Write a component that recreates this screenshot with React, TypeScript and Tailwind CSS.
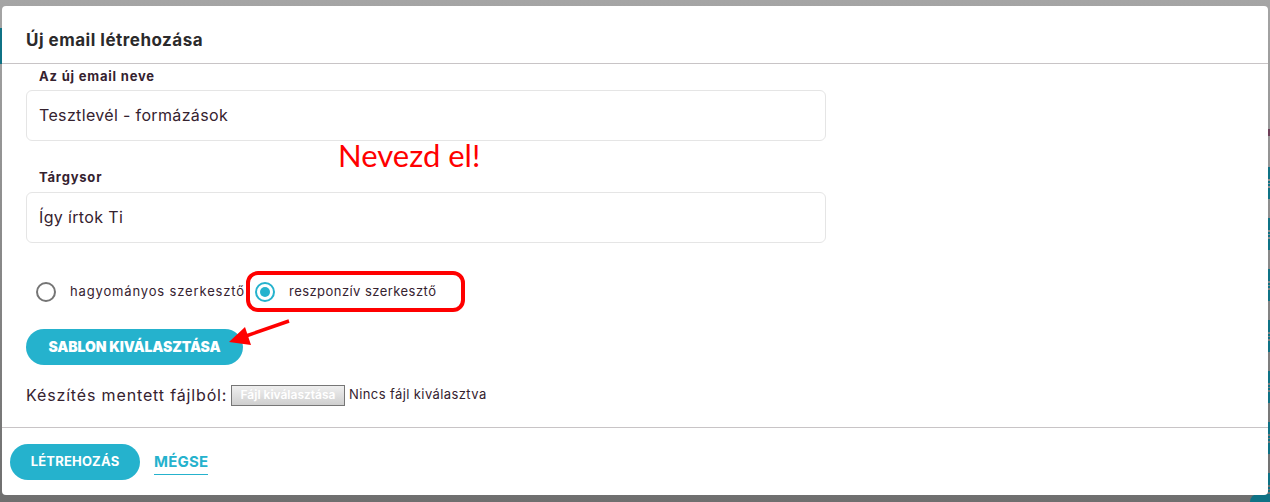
const font = "font-['Inter','Liberation_Sans',sans-serif]"

const stripeTops = [167, 218, 269, 320, 371, 422, 473]

function Field({ label, value, wide }: { label: string; value: string; wide?: boolean }) {
  return (
    <div className="w-[800px]">
      <p className="pl-[13px] text-[13px] leading-[20px] font-bold tracking-[0.8px] text-[#35222f]">{label}</p>
      <div className={`${wide ? 'mt-[5px]' : 'mt-[4px]'} h-[51px] rounded-md border border-[#e5e5e5] pl-[12px] pb-[2px] flex items-center text-[16px] tracking-[0.35px] text-[#35222f]`}>
        {value}
      </div>
    </div>
  )
}

function Radio({ checked }: { checked?: boolean }) {
  if (checked) {
    return (
      <span className="w-5 h-5 rounded-full border-2 border-[#25b2cd] flex items-center justify-center shrink-0">
        <span className="w-[10px] h-[10px] rounded-full bg-[#25b2cd]" />
      </span>
    )
  }
  return <span className="block w-5 h-5 rounded-full border-2 border-[#757575] shrink-0" />
}

export default function App() {
  return (
    <div className={`${font} relative w-[1270px] h-[502px] overflow-hidden bg-gradient-to-b from-[#a5a5a5] to-[#6f6f6f] pt-[6px] pl-[2px]`}>
      {/* backdrop peeking out around the modal */}
      <div className="absolute left-0 top-[28px] w-[2px] h-[36px] bg-[#0f7285]" />
      <div className="absolute right-0 top-[129px] w-[2px] h-[7px] bg-[#6e3f58]" />
      {stripeTops.map((top) => (
        <div key={top} className="absolute right-0 w-[2px] h-[32px] flex flex-col justify-between" style={{ top }}>
          <div className="h-[12px] bg-[#0f7285]" />
          <div className="h-[2px] bg-[#0f7285]" />
          <div className="h-[2px] bg-[#0f7285]" />
          <div className="h-[11px] bg-[#0f7285]" />
        </div>
      ))}
      <div className="absolute right-0 bottom-0 w-[20px] h-[8px] rounded-tl-full bg-[#0f7285]" />

      <div className="relative w-[1266px] h-[489px] rounded-[4px] bg-white flex flex-col">
        <div className="h-[58px] shrink-0 border-b border-[#c8c4c6] pl-[24px] pt-[22px] text-[17px] leading-[24px] tracking-[0.5px] font-bold text-[#2b2a2b]">
          Új email létrehozása
        </div>

        <div className="flex-1 pl-[24px]">
          <div className="pt-[2px]">
            <Field label="Az új email neve" value="Tesztlevél - formázások" />
          </div>
          <div className="mt-[26px]">
            <Field label="Tárgysor" value="Így írtok Ti" wide />
          </div>

          <div className="mt-[28px] h-[42px] flex items-center text-[13px] text-[#35222f]">
            <span className="block ml-[10px]"><Radio /></span>
            <span className="ml-[14px] w-[175px] tracking-[0.85px] whitespace-nowrap">hagyományos szerkesztő</span>
            <span className="relative flex items-center ml-[10px]">
              <Radio checked />
              <span className="ml-[14px] tracking-[0.45px]">reszponzív szerkesztő</span>
            </span>
          </div>

          <button className="mt-[16px] block w-[217px] h-[36px] pb-[2px] rounded-full bg-[#25b2cd] text-white text-[14px] tracking-[-0.1px] font-black">
            SABLON KIVÁLASZTÁSA
          </button>

          <div className="mt-[19px] flex items-center h-[22px] text-[16px] tracking-[0.85px] text-[#35222f]">
            <span className="w-[200px] whitespace-nowrap">Készítés mentett fájlból:</span>
            <span className="ml-[5px] w-[114px] h-[21px] border border-[#767676] bg-gradient-to-b from-[#efefef] to-[#cfcfcf] text-[12px] text-white font-semibold tracking-normal flex items-center justify-center">
              Fájl kiválasztása
            </span>
            <span className="ml-[4px] text-[13px] tracking-[0.4px]">Nincs fájl kiválasztva</span>
          </div>
        </div>

        <div className="h-[68px] shrink-0 border-t border-[#c8c4c6] pl-[8px] pt-[16px] flex items-start">
          <button className="w-[130px] h-[36px] rounded-full bg-[#25b2cd] text-white text-[13px] tracking-[0.2px] font-bold">
            LÉTREHOZÁS
          </button>
          <span className="ml-[14px] h-[31px] border-b border-[#25b2cd] text-[#25b2cd] text-[15px] leading-[36px] tracking-[0.2px] font-bold">
            MÉGSE
          </span>
        </div>

        {/* annotations */}
        <div className="absolute left-[336px] top-[129px] text-[31px] leading-[40px] text-[#ff0000] font-['Lato',sans-serif]">
          Nevezd el!
        </div>
        <div className="absolute left-[244px] top-[265px] w-[219px] h-[41px] rounded-[12px] border-4 border-[#ff0000]" />
        <svg className="absolute left-[226px] top-[312px]" width="64" height="30" viewBox="0 0 64 30">
          <line x1="61" y1="3" x2="18" y2="18" stroke="#ff0000" strokeWidth="3.5" />
          <polygon points="1,24 17,9 23,27" fill="#ff0000" />
        </svg>
      </div>
    </div>
  )
}
